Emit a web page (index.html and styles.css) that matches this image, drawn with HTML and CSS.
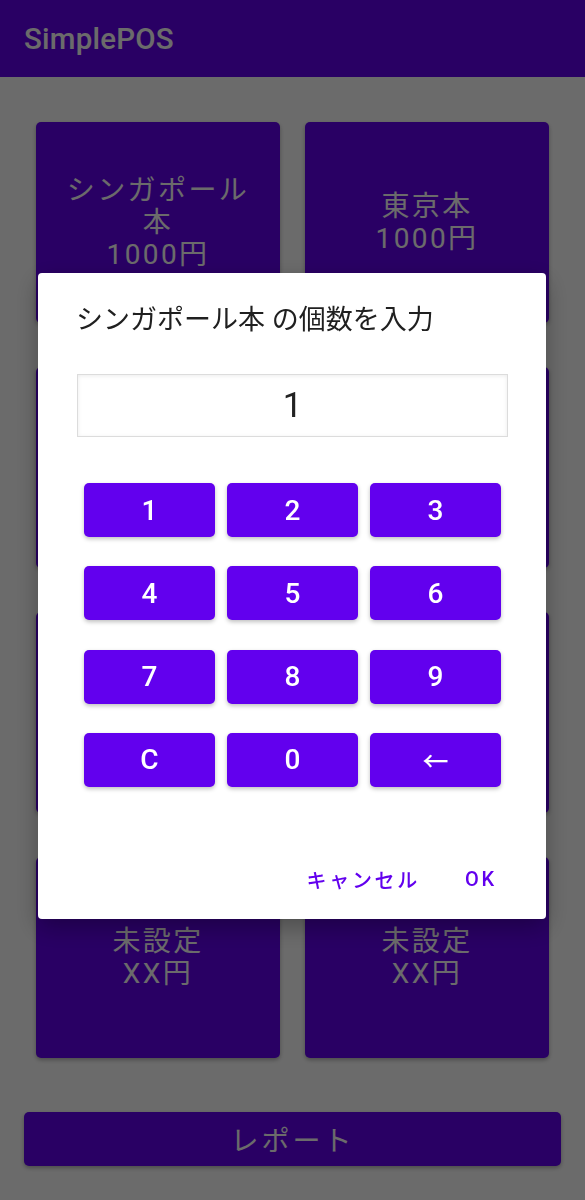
FILE: index.html
```html
<!DOCTYPE html>
<html lang="ja">
<head>
<meta charset="utf-8">
<title>SimplePOS</title>
<link rel="stylesheet" href="styles.css">
</head>
<body>
  <header class="app-bar">
    <h1 class="app-title">SimplePOS</h1>
  </header>

  <main class="pos">
    <div class="product-grid">
      <button class="product">シンガポール本<br>1000円</button>
      <button class="product">東京本<br>1000円</button>
      <button class="product">未設定<br>XX円</button>
      <button class="product">未設定<br>XX円</button>
      <button class="product">未設定<br>XX円</button>
      <button class="product">未設定<br>XX円</button>
      <button class="product">未設定<br>XX円</button>
      <button class="product">未設定<br>XX円</button>
    </div>
    <button class="report">レポート</button>
  </main>

  <div class="scrim"></div>

  <div class="dialog" role="dialog">
    <h2 class="dialog-title">シンガポール本 の個数を入力</h2>
    <div class="qty-field">1</div>
    <div class="keypad">
      <button class="key">1</button>
      <button class="key">2</button>
      <button class="key">3</button>
      <button class="key">4</button>
      <button class="key">5</button>
      <button class="key">6</button>
      <button class="key">7</button>
      <button class="key">8</button>
      <button class="key">9</button>
      <button class="key">C</button>
      <button class="key">0</button>
      <button class="key key-back">←</button>
    </div>
    <div class="dialog-actions">
      <button class="text-btn">キャンセル</button>
      <button class="text-btn">OK</button>
    </div>
  </div>
</body>
</html>
```

FILE: styles.css
```css
* {
  box-sizing: border-box;
}

html, body {
  margin: 0;
  padding: 0;
}

body {
  width: 585px;
  height: 1200px;
  background: #ffffff;
  font-family: Roboto, "Noto Sans CJK JP", sans-serif;
  overflow: hidden;
}

button {
  font-family: inherit;
  border: none;
  cursor: pointer;
}

/* top app bar */
.app-bar {
  height: 77px;
  background: #6200ee;
  display: flex;
  align-items: center;
  padding-left: 24px;
}

.app-title {
  margin: 0;
  color: #ffffff;
  font-size: 29.5px;
  font-weight: 500;
  letter-spacing: 0.2px;
}

/* product buttons */
.pos {
  display: flex;
  flex-direction: column;
  padding: 45px 0 0;
}

.product-grid {
  display: grid;
  grid-template-columns: 244px 244px;
  grid-auto-rows: 201px;
  column-gap: 25px;
  row-gap: 44px;
  padding: 0 36px;
}

.product {
  background: #6200ee;
  color: #ffffff;
  border-radius: 5px;
  font-size: 28px;
  line-height: 32px;
  font-weight: 400;
  letter-spacing: 2.4px;
  padding: 0 22px;
  box-shadow: 0 2px 4px rgba(0, 0, 0, 0.3);
}

.report {
  margin: 54px 24px 0;
  height: 54px;
  background: #6200ee;
  color: #ffffff;
  border-radius: 5px;
  font-size: 28px;
  font-weight: 400;
  letter-spacing: 3px;
  box-shadow: 0 2px 4px rgba(0, 0, 0, 0.3);
}

/* modal dim layer */
.scrim {
  position: fixed;
  inset: 0;
  background: rgba(0, 0, 0, 0.58);
}

/* quantity dialog */
.dialog {
  position: fixed;
  left: 38px;
  top: 273px;
  width: 508px;
  height: 646px;
  background: #ffffff;
  border-radius: 4px;
  box-shadow: 0 8px 24px rgba(0, 0, 0, 0.3);
  display: flex;
  flex-direction: column;
}

.dialog-title {
  margin: 0;
  padding: 29px 38px 0;
  font-size: 27px;
  line-height: 36px;
  font-weight: 400;
  color: #202020;
}

.qty-field {
  margin: 36px 38px 0 39px;
  height: 63px;
  border: 1px solid #dcdcdc;
  box-shadow: inset 0 1px 4px rgba(0, 0, 0, 0.08);
  display: flex;
  align-items: center;
  justify-content: center;
  font-size: 35px;
  color: #222222;
}

.keypad {
  margin: 46px 45px 0 46px;
  display: grid;
  grid-template-columns: repeat(3, 131px);
  grid-auto-rows: 54px;
  column-gap: 12px;
  row-gap: 29.3px;
}

.key {
  background: #6200ee;
  color: #ffffff;
  border-radius: 5px;
  font-size: 28px;
  font-weight: 500;
  box-shadow: 0 2px 4px rgba(0, 0, 0, 0.25);
}

.key-back {
  font-size: 26px;
}

.dialog-actions {
  margin-top: auto;
  display: flex;
  justify-content: flex-end;
  gap: 6px;
  padding: 0 21px 15px;
}

.text-btn {
  background: transparent;
  color: #6200ee;
  height: 50px;
  min-width: 88px;
  padding: 0 11px;
  font-size: 20px;
  font-weight: 500;
  letter-spacing: 2.7px;
}
```
